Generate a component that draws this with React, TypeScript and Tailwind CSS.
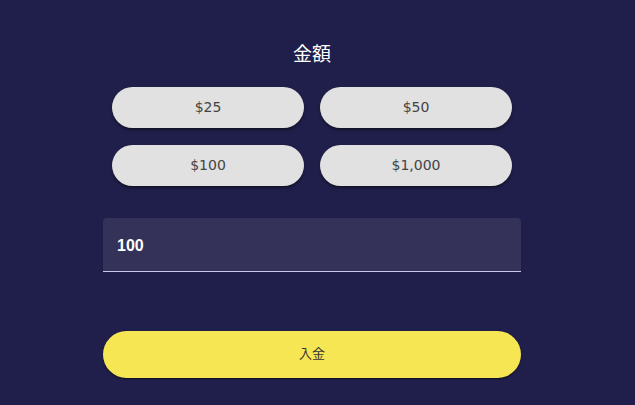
import React, { useState } from 'react';

const amounts = ['$25', '$50', '$100', '$1,000'];

export default function App() {
    const [value, setValue] = useState('100');

    return (
        <div className="w-[635px] h-[405px] bg-[#201f4b] overflow-hidden flex justify-center pr-[11px] font-['Noto_Sans','Noto_Sans_CJK_JP',sans-serif]">
            <div className="w-[418px] flex flex-col items-center pt-[39px]">
                <h2 className="text-[19px] leading-[28px] text-white font-['Noto_Sans_CJK_JP',sans-serif]">金額</h2>

                <div className="grid grid-cols-2 gap-x-4 gap-y-[17px] w-[400px] mt-[20px]">
                    {amounts.map(a => (
                        <button
                            key={a}
                            onClick={() => setValue(a.replace(/[$,]/g, ''))}
                            className="h-[41px] rounded-full bg-[#e1e1e1] text-[#444] text-[14px] shadow-[0_2px_3px_rgba(0,0,0,0.45)] font-['DejaVu_Sans',Verdana,sans-serif]"
                        >
                            {a}
                        </button>
                    ))}
                </div>

                <div className="w-full mt-[32px] h-[54px] bg-[#35325a] rounded-t-[4px] border-b border-[#c9c8ea] flex items-center px-[14px] pt-[3px]">
                    <input
                        value={value}
                        onChange={e => setValue(e.target.value)}
                        className="bg-transparent outline-none text-white font-bold text-[16px] w-full font-['Liberation_Sans',Arial,sans-serif]"
                    />
                </div>

                <button className="w-full mt-[59px] h-[47px] rounded-full bg-[#f7e653] text-[#333] text-[13px] pb-[3px] shadow-[0_1px_2px_rgba(0,0,0,0.6)] font-['Noto_Sans_CJK_JP',sans-serif]">
                    入金
                </button>
            </div>
        </div>
    );
}
